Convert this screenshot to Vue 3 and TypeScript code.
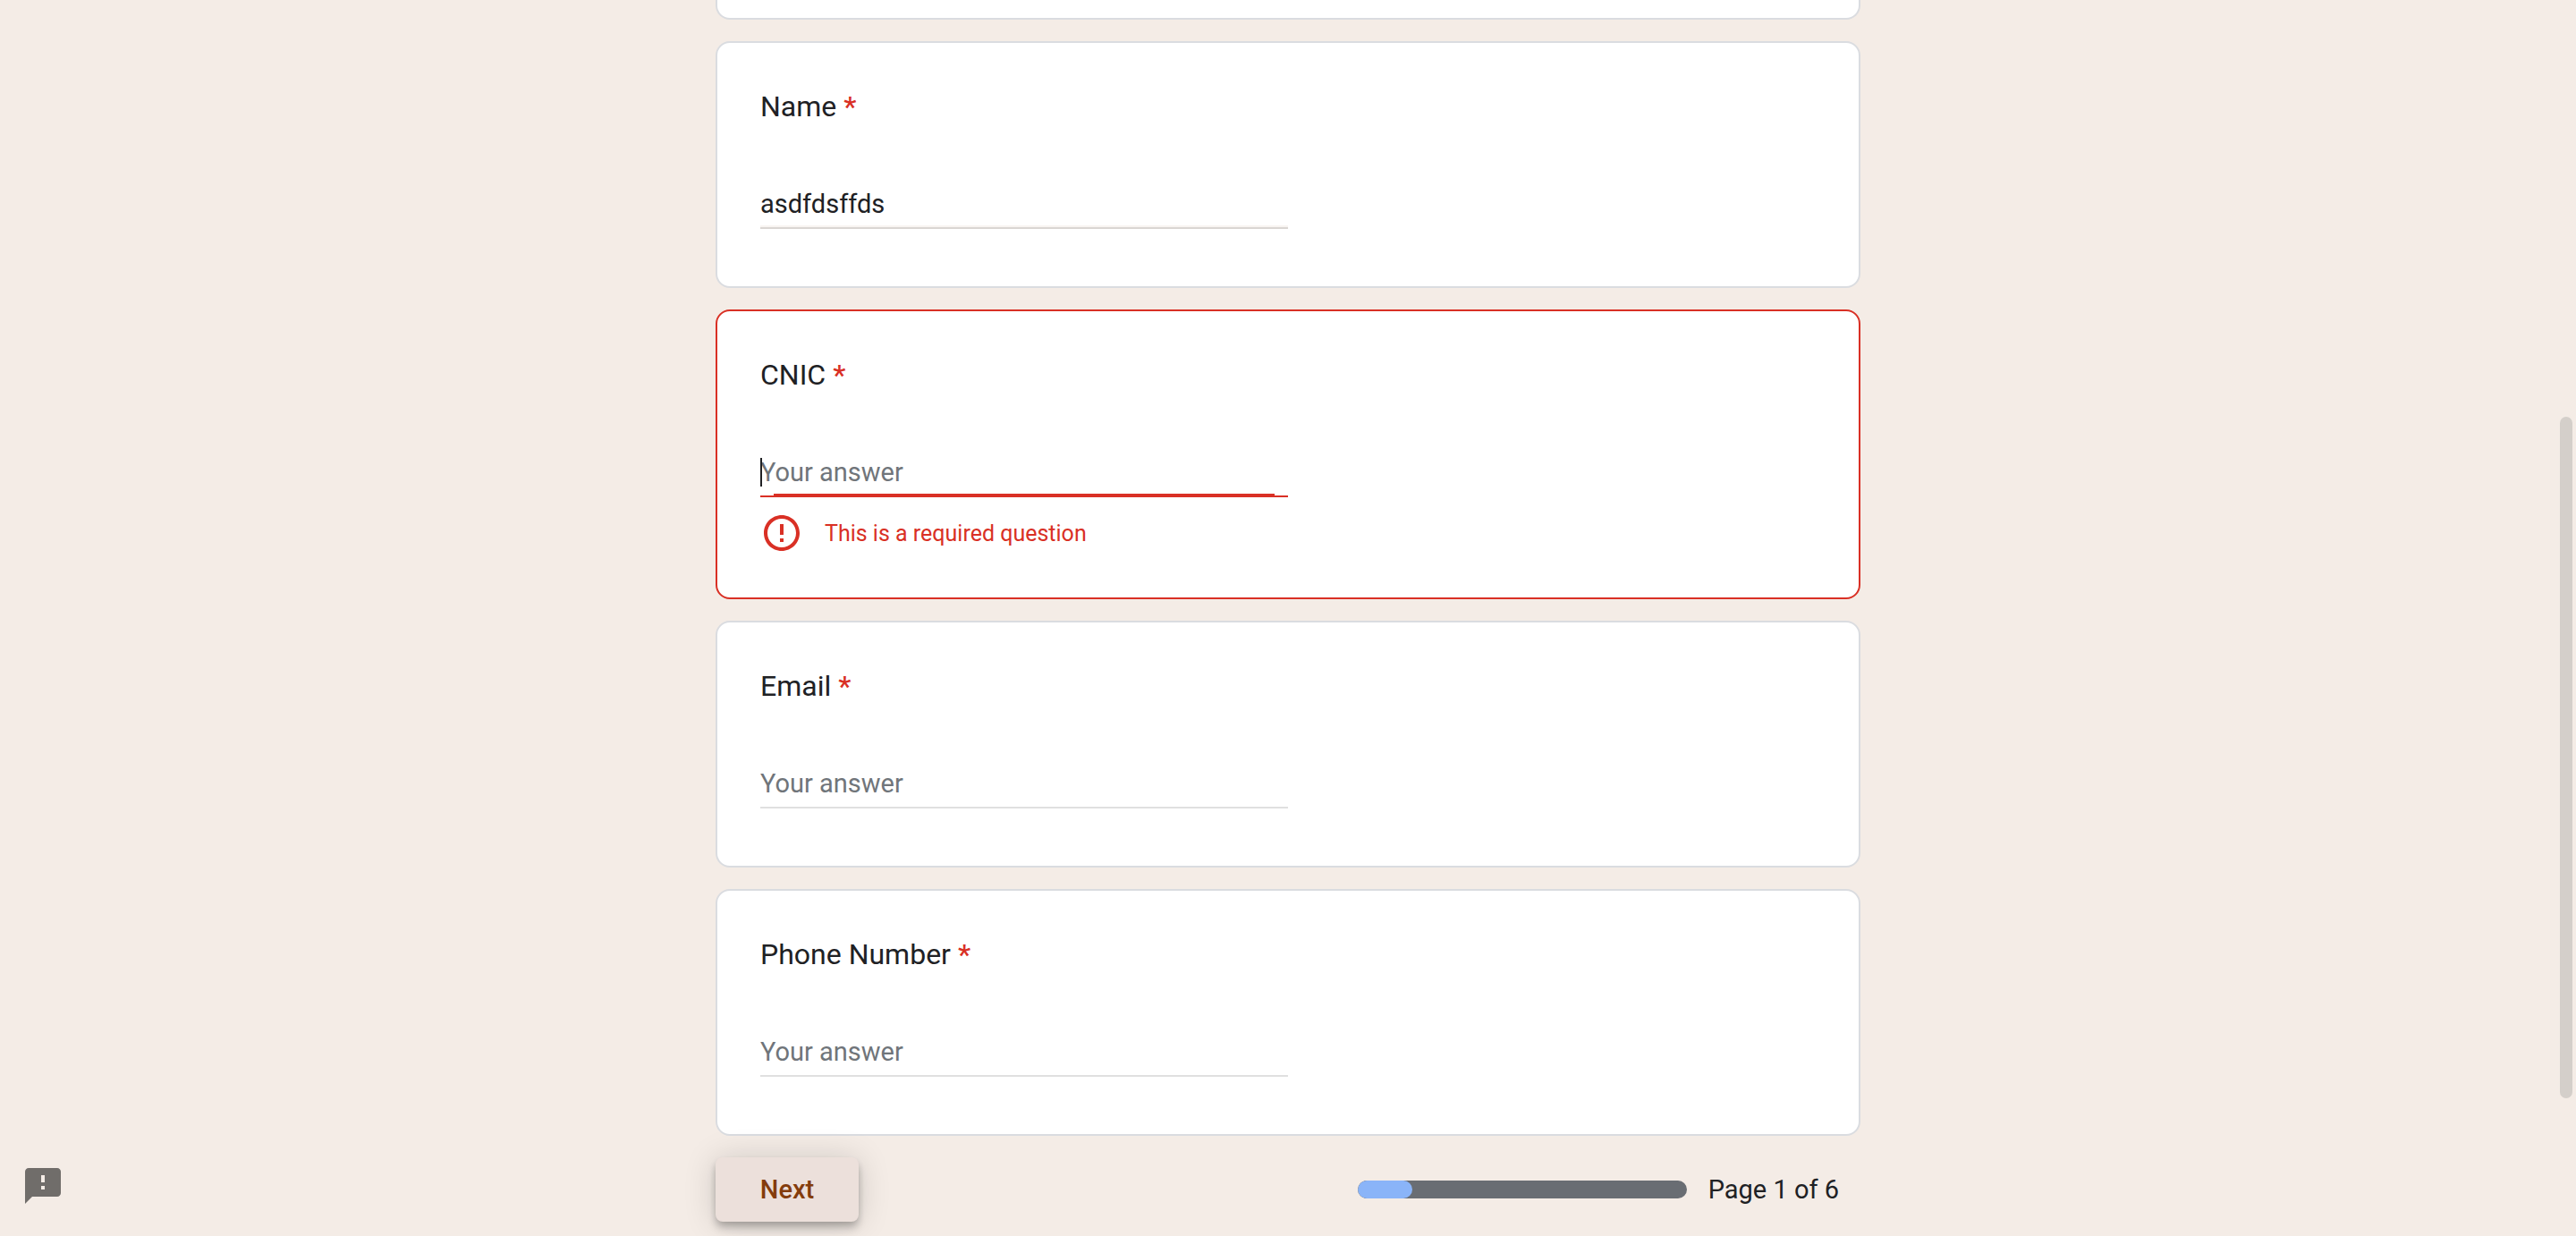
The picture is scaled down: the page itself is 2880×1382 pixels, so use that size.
<script setup lang="ts">
import { computed, reactive } from 'vue'

interface Question {
  id: string
  title: string
  value: string
  error?: string
  active?: boolean
  fading?: boolean
}

const questions = reactive<Question[]>([
  { id: 'name', title: 'Name', value: 'asdfdsffds', fading: true },
  { id: 'cnic', title: 'CNIC', value: '', error: 'This is a required question', active: true },
  { id: 'email', title: 'Email', value: '' },
  { id: 'phone', title: 'Phone Number', value: '' },
])

const page = 1
const pageCount = 6
const progress = computed(() => ({ width: `${(page / pageCount) * 100}%` }))

const scroll = { top: 466, visible: 762, total: 1382 }
const thumb = computed(() => ({
  top: `${(scroll.top / scroll.total) * 100}%`,
  height: `${(scroll.visible / scroll.total) * 100}%`,
}))
</script>

<template>
  <main class="page">
    <form class="form" novalidate @submit.prevent>
      <div class="card card-previous"></div>

      <section v-for="q in questions" :key="q.id" class="card question" :class="{ invalid: q.error }">
        <label class="title" :for="q.id">{{ q.title }} <span class="required">*</span></label>
        <div class="field" :class="{ active: q.active, fading: q.fading }">
          <input
            :id="q.id"
            v-model="q.value"
            class="answer"
            type="text"
            placeholder="Your answer"
            autocomplete="off"
            spellcheck="false"
            required
            :aria-invalid="!!q.error"
            :aria-describedby="q.error ? `${q.id}-error` : undefined"
          />
          <span v-if="q.active" class="caret" aria-hidden="true"></span>
        </div>
        <div v-if="q.error" :id="`${q.id}-error`" class="error" role="alert">
          <svg class="icon" viewBox="0 0 24 24" aria-hidden="true">
            <path
              d="M11 15h2v2h-2zm0-8h2v6h-2zm.99-5C6.47 2 2 6.48 2 12s4.47 10 9.99 10C17.52 22 22 17.52 22 12S17.52 2 11.99 2zM12 20c-4.42 0-8-3.58-8-8s3.58-8 8-8 8 3.58 8 8-3.58 8-8 8z"
            />
          </svg>
          <span>{{ q.error }}</span>
        </div>
      </section>

      <footer class="footer">
        <button class="next" type="submit">Next</button>
        <div class="progress">
          <div
            class="track"
            role="progressbar"
            aria-label="Form progress"
            :aria-valuenow="page"
            aria-valuemin="0"
            :aria-valuemax="pageCount"
          >
            <div class="bar" :style="progress"></div>
          </div>
          <span>Page {{ page }} of {{ pageCount }}</span>
        </div>
      </footer>
    </form>

    <button class="report" type="button" aria-label="Report a problem">
      <svg class="icon" viewBox="0 0 24 24" aria-hidden="true">
        <path
          d="M20 2H4c-1.1 0-1.99.9-1.99 2L2 22l4-4h14c1.1 0 2-.9 2-2V4c0-1.1-.9-2-2-2zm-7 12h-2v-2h2v2zm0-4h-2V6h2v4z"
        />
      </svg>
    </button>

    <div class="scroll" aria-hidden="true"><div class="thumb" :style="thumb"></div></div>
  </main>
</template>

<style>
body {
  margin: 0;
  background: #f4ece6;
}
</style>

<style scoped>
* {
  box-sizing: border-box;
}
.page {
  min-height: 100vh;
  background: #f4ece6;
  color: #202124;
  font-family: Roboto, "Liberation Sans", sans-serif;
  font-size: 29px;
}
.form {
  display: flex;
  flex-direction: column;
  gap: 24px;
  width: 100%;
  max-width: 1280px;
  margin: 0 auto;
}
.card {
  background: #fff;
  border: 2px solid #dadce0;
  border-radius: 16px;
}
.card-previous {
  height: 22px;
  border-top: 0;
  border-top-left-radius: 0;
  border-top-right-radius: 0;
}
.question {
  padding: 48px 48px 64px;
}
.question.invalid {
  padding-bottom: 48px;
  border-color: #d93025;
}
.title {
  display: block;
  font-size: 32px;
  line-height: 46px;
}
.required {
  color: #d93025;
  font-weight: 500;
}
.field {
  position: relative;
  width: 50%;
  margin-top: 62px;
}
.answer {
  display: block;
  width: 100%;
  height: 52px;
  padding: 0 0 2px;
  border: 0;
  border-bottom: 2px solid #e0e0e0;
  border-radius: 0;
  outline: 0;
  background: transparent;
  color: #202124;
  font: inherit;
}
.answer::placeholder {
  color: #70757a;
  opacity: 1;
}
.invalid .answer {
  border-color: #d93025;
}
.active::after,
.fading::after {
  content: "";
  position: absolute;
  right: 0;
  bottom: 0;
  left: 0;
  height: 4px;
  background: #843c0c;
  opacity: 0.06;
}
.active::after {
  right: 15px;
  left: 15px;
  background: #d93025;
  opacity: 1;
}
.caret {
  position: absolute;
  top: 8px;
  left: 0;
  width: 2px;
  height: 32px;
  background: #202124;
}
.error {
  display: flex;
  align-items: center;
  gap: 24px;
  margin-top: 16px;
  color: #d93025;
  font-size: 25px;
}
.icon {
  display: block;
  width: 48px;
  height: 48px;
  fill: currentColor;
}
.footer {
  display: flex;
  align-items: center;
  justify-content: space-between;
}
.next {
  width: 160px;
  height: 72px;
  padding: 0;
  border: 0;
  border-radius: 8px;
  background: #ece0db;
  box-shadow:
    0 4px 8px -2px rgba(0, 0, 0, 0.2),
    0 8px 10px 0 rgba(0, 0, 0, 0.14),
    0 2px 36px 0 rgba(0, 0, 0, 0.16);
  color: #843c0c;
  font: inherit;
  font-weight: 500;
}
.progress {
  display: flex;
  align-items: center;
  gap: 24px;
  margin-right: 24px;
}
.track {
  width: 368px;
  height: 20px;
  overflow: hidden;
  border-radius: 10px;
  background: #696d73;
}
.bar {
  height: 100%;
  border-radius: 10px;
  background: #8ab4f8;
}
.report {
  position: fixed;
  bottom: 32px;
  left: 24px;
  padding: 0;
  border: 0;
  background: transparent;
  color: #706d6a;
}
.scroll {
  position: fixed;
  top: 0;
  right: 4px;
  bottom: 0;
  width: 14px;
}
.thumb {
  position: absolute;
  width: 100%;
  border-radius: 7px;
  background: #d4cfca;
}
</style>
